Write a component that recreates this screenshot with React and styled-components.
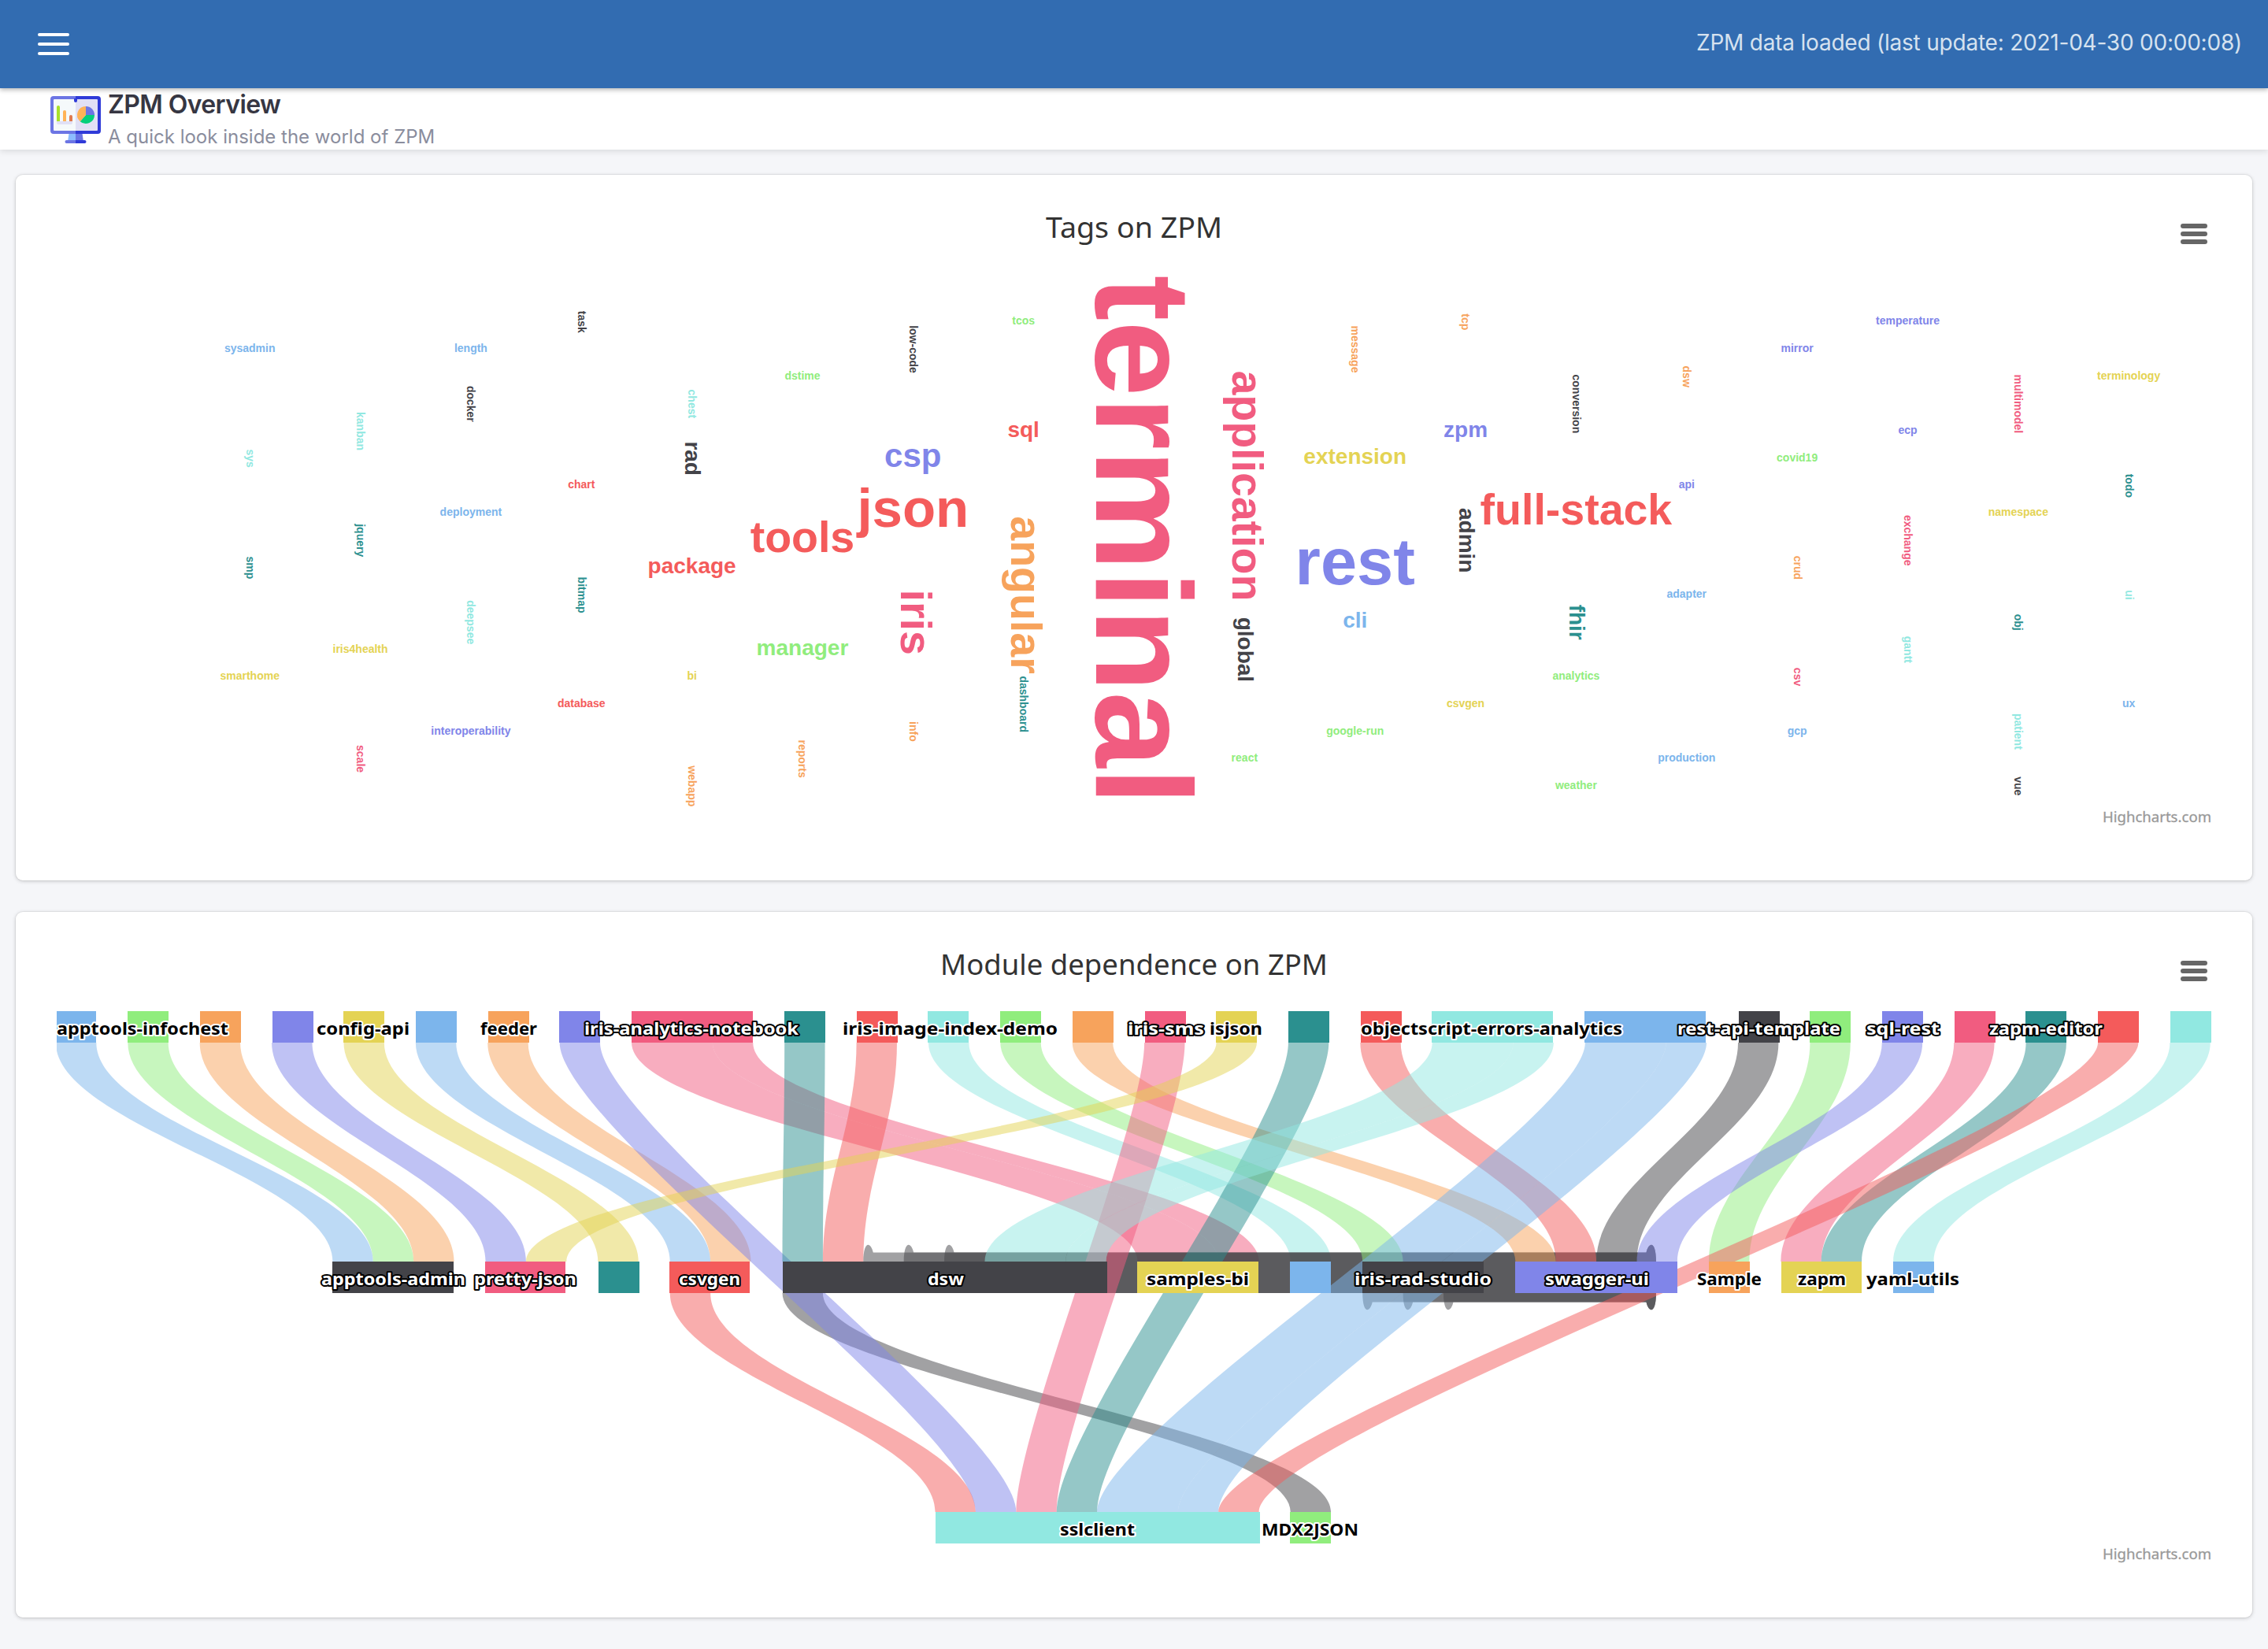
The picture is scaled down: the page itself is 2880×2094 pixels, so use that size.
import React from 'react';
import styled, { createGlobalStyle } from 'styled-components';

const GlobalStyle = createGlobalStyle`
  * { box-sizing: border-box; }
  body {
    margin: 0;
    background: #f5f6f9;
    font-family: Inter, Roboto, "Liberation Sans", sans-serif;
  }
`;

const palette = {
  blue: '#7cb5ec',
  dark: '#434348',
  green: '#90ed7d',
  orange: '#f7a35c',
  indigo: '#8085e9',
  pink: '#f15c80',
  yellow: '#e4d354',
  teal: '#2b908f',
  red: '#f45b5b',
  cyan: '#91e8e1',
};

/* ---------- shell ---------- */

const Page = styled.div`
  display: flex;
  flex-direction: column;
  min-height: 2094px;
`;

const TopBar = styled.header`
  display: flex;
  align-items: center;
  justify-content: space-between;
  height: 112px;
  padding: 0 33px 0 48px;
  background: #326cb1;
  box-shadow: 0 2px 6px rgba(0, 0, 0, 0.3);
  z-index: 2;
`;

const MenuButton = styled.button`
  display: flex;
  flex-direction: column;
  gap: 8px;
  padding: 0;
  border: 0;
  background: none;
`;

const MenuLine = styled.span`
  width: 40px;
  height: 4px;
  border-radius: 2px;
  background: #fff;
`;

const Status = styled.span`
  font-size: 28px;
  line-height: 34px;
  letter-spacing: ${(p) => p.$tracking};
  color: #d6e2ef;
  white-space: nowrap;
  padding-bottom: 4px;
`;

const PageHeading = styled.section`
  display: flex;
  align-items: flex-start;
  gap: 9px;
  height: 78px;
  padding: 0 64px;
  background: #fff;
  box-shadow: 0 2px 8px rgba(0, 0, 0, 0.12);
  z-index: 1;
`;

const HeadingIcon = styled.svg`
  display: block;
  width: 64px;
  height: 64px;
  margin-top: 8px;
`;

const HeadingText = styled.div`
  display: flex;
  flex-direction: column;
`;

const Title = styled.h1`
  margin: 1px 0 0;
  font-size: 32px;
  line-height: 40px;
  font-weight: 600;
  letter-spacing: ${(p) => p.$tracking};
  color: #363642;
`;

const Subtitle = styled.p`
  margin: 5px 0 0;
  font-size: 24px;
  line-height: 32px;
  letter-spacing: ${(p) => p.$tracking};
  color: #8a8d9d;
`;

const Content = styled.main`
  display: flex;
  flex-direction: column;
  gap: 40px;
  padding: 32px 20px 40px;
`;

const Card = styled.article`
  display: flex;
  height: 896px;
  border-radius: 9px;
  background: #fff;
  box-shadow: 0 0 0 1px rgba(0, 0, 0, 0.04), 0 1px 5px rgba(0, 0, 0, 0.2);
`;

const Chart = styled.svg`
  display: block;
  width: 100%;
  height: 100%;
`;

const ChartTitle = styled.text`
  font-family: "Noto Sans", "Open Sans", sans-serif;
  font-size: 36px;
  fill: #333;
`;

const Credits = styled.text`
  font-family: "Noto Sans", "Open Sans", sans-serif;
  font-size: 18px;
  fill: #999;
  stroke: #999;
  stroke-width: 0.3px;
`;

const TagText = styled.text`
  font-family: "Liberation Sans", Arial, sans-serif;
  font-weight: 700;
  font-size: ${(p) => p.$size}px;
  fill: ${(p) => p.$color};
  text-anchor: middle;
`;

const NodeLabel = styled.text`
  font-family: "Noto Sans", "Open Sans", sans-serif;
  font-weight: 700;
  font-size: 22px;
  fill: ${(p) => (p.$light ? '#fff' : '#000')};
  stroke: ${(p) => (p.$light ? '#000' : '#fff')};
  stroke-width: 4px;
  stroke-linejoin: round;
  paint-order: stroke;
`;

function ContextMenu() {
  return (
    <g stroke="#666" strokeWidth="6" strokeLinecap="round">
      <path d="M2752 65H2780M2752 75H2780M2752 85H2780" />
    </g>
  );
}

function ChartFrame({ title, titleX, titleWidth, children }) {
  return (
    <Card>
      <Chart viewBox="0 0 2840 896">
        <ChartTitle x={titleX} y="80" textLength={titleWidth} lengthAdjust="spacingAndGlyphs">
          {title}
        </ChartTitle>
        {children}
        <ContextMenu />
        <Credits x="2650" y="822" textLength="138" lengthAdjust="spacingAndGlyphs">
          Highcharts.com
        </Credits>
      </Chart>
    </Card>
  );
}

/* ---------- word cloud ---------- */

// [text, column, row, colour, rotated, size]
const tags = [
  ['sysadmin', -8, 0, 'blue'], ['sys', -8, 4, 'cyan', 1], ['smp', -8, 8, 'teal', 1], ['smarthome', -8, 12, 'yellow'],
  ['kanban', -7, 3, 'cyan', 1], ['jquery', -7, 7, 'teal', 1], ['iris4health', -7, 11, 'yellow'], ['scale', -7, 15, 'pink', 1],
  ['length', -6, 0, 'blue'], ['docker', -6, 2, 'dark', 1], ['deployment', -6, 6, 'blue'], ['deepsee', -6, 10, 'cyan', 1],
  ['interoperability', -6, 14, 'indigo'],
  ['task', -5, -1, 'dark', 1], ['chart', -5, 5, 'red'], ['bitmap', -5, 9, 'teal', 1], ['database', -5, 13, 'red'],
  ['chest', -4, 2, 'cyan', 1], ['rad', -4, 4, 'dark', 1, 28], ['package', -4, 8, 'red', 0, 28], ['bi', -4, 12, 'yellow'],
  ['webapp', -4, 16, 'orange', 1],
  ['dstime', -3, 1, 'green'], ['tools', -3, 7, 'red', 0, 55.5], ['manager', -3, 11, 'green', 0, 28], ['reports', -3, 15, 'orange', 1],
  ['low-code', -2, 0, 'dark', 1], ['csp', -2, 4, 'indigo', 0, 42], ['json', -2, 6, 'red', 0, 69], ['iris', -2, 10, 'pink', 1, 55.5],
  ['info', -2, 14, 'orange', 1],
  ['tcos', -1, -1, 'green'], ['sql', -1, 3, 'red', 0, 28], ['angular', -1, 9, 'orange', 1, 55.5], ['dashboard', -1, 13, 'teal', 1],
  ['terminal', 0, 7, 'pink', 1, 173],
  ['application', 1, 5, 'pink', 1, 55.5], ['global', 1, 11, 'dark', 1, 28], ['react', 1, 15, 'green'],
  ['message', 2, 0, 'orange', 1], ['extension', 2, 4, 'yellow', 0, 28], ['rest', 2, 8, 'indigo', 0, 83], ['cli', 2, 10, 'blue', 0, 28],
  ['google-run', 2, 14, 'green'],
  ['tcp', 3, -1, 'orange', 1], ['zpm', 3, 3, 'indigo', 0, 28], ['admin', 3, 7, 'dark', 1, 28], ['csvgen', 3, 13, 'yellow'],
  ['conversion', 4, 2, 'dark', 1], ['full-stack', 4, 6, 'red', 0, 55.5], ['fhir', 4, 10, 'teal', 1, 28], ['analytics', 4, 12, 'green'],
  ['weather', 4, 16, 'green'],
  ['dsw', 5, 1, 'orange', 1], ['api', 5, 5, 'indigo'], ['adapter', 5, 9, 'blue'], ['production', 5, 15, 'blue'],
  ['mirror', 6, 0, 'indigo'], ['covid19', 6, 4, 'green'], ['crud', 6, 8, 'orange', 1], ['csv', 6, 12, 'pink', 1], ['gcp', 6, 14, 'blue'],
  ['temperature', 7, -1, 'indigo'], ['ecp', 7, 3, 'indigo'], ['exchange', 7, 7, 'pink', 1], ['gantt', 7, 11, 'cyan', 1],
  ['multimodel', 8, 2, 'pink', 1], ['namespace', 8, 6, 'yellow'], ['obj', 8, 10, 'teal', 1], ['patient', 8, 14, 'cyan', 1],
  ['vue', 8, 16, 'dark', 1],
  ['terminology', 9, 1, 'yellow'], ['todo', 9, 5, 'teal', 1], ['ui', 9, 9, 'cyan', 1], ['ux', 9, 13, 'blue'],
];

function Tag({ tag }) {
  const [text, column, row, color, rotated, size = 14] = tag;
  const x = 1420 + column * 140.35;
  const y = 221.5 + row * 34.67;
  const baseline = rotated ? size * 0.27 + 0.8 : size * 0.26;
  return (
    <TagText
      $size={size}
      $color={palette[color]}
      y={baseline}
      transform={`translate(${x} ${y})${rotated ? ' rotate(90)' : ''}`}
    >
      {text}
    </TagText>
  );
}

/* ---------- dependency sankey ---------- */

const UNIT = 51.39;
const GAP = 40;
const NODE_HEIGHT = 40;
const ROW_DISTANCE = 318;
const CURVE_FACTOR = 0.33;
const rowY = [126, 444, 762];

// Each row: left edge and its nodes as [id, weight, colour]
const rows = [
  {
    left: 50.9,
    nodes: [
      ['t1', 1, 'blue'], ['t2', 1, 'green'], ['t3', 1, 'orange'], ['t4', 1, 'indigo'], ['t5', 1, 'yellow'],
      ['t6', 1, 'blue'], ['t7', 1, 'orange'], ['t8', 1, 'indigo'], ['t9', 3, 'pink'], ['t10', 1, 'teal'],
      ['t11', 1, 'red'], ['t12', 1, 'cyan'], ['t13', 1, 'green'], ['t14', 1, 'orange'], ['t15', 1, 'pink'],
      ['t16', 1, 'yellow'], ['t17', 1, 'teal'], ['t18', 1, 'red'], ['t19', 3, 'cyan'], ['t20', 3, 'blue'],
      ['t21', 1, 'dark'], ['t22', 1, 'green'], ['t23', 1, 'indigo'], ['t24', 1, 'pink'], ['t25', 1, 'teal'],
      ['t26', 1, 'red'], ['t27', 1, 'cyan'],
    ],
  },
  {
    left: 402.4,
    nodes: [
      ['admin', 3, 'dark'], ['pretty', 2, 'pink'], ['m3', 1, 'teal'], ['csvgen', 2, 'red'], ['dsw', 8, 'dark'],
      ['samples', 3, 'yellow'], ['m7', 1, 'blue'], ['studio', 3, 'dark'], ['swagger', 4, 'indigo'],
      ['sample', 1, 'orange'], ['zapm', 2, 'yellow'], ['yaml', 1, 'blue'],
    ],
  },
  { left: 1167.6, nodes: [['ssl', 8, 'cyan'], ['mdx', 1, 'green']] },
];

// [from, to, weight]; the entry "loop" is the iris-rad-studio to dsw back link
const links = [
  ['t1', 'admin', 1], ['t2', 'admin', 1], ['t3', 'admin', 1], ['t4', 'pretty', 1], ['t5', 'm3', 1],
  ['csvgen', 'ssl', 1], ['t6', 'csvgen', 1], ['dsw', 'mdx', 1], ['t7', 'csvgen', 1], ['t8', 'ssl', 1],
  ['t9', 'samples', 2], ['t9', 'samples', 1], ['t10', 'dsw', 1], ['t11', 'dsw', 1], ['t12', 'm7', 1],
  ['loop', 'dsw', 3],
  ['t13', 'studio', 1], ['t14', 'swagger', 1], ['t15', 'ssl', 1], ['t16', 'pretty', 1], ['t17', 'ssl', 1],
  ['t18', 'swagger', 1], ['t19', 'dsw', 2], ['t19', 'dsw', 1], ['t20', 'ssl', 2], ['t20', 'ssl', 1],
  ['t21', 'swagger', 1], ['t22', 'sample', 1], ['t23', 'swagger', 1], ['t24', 'zapm', 1], ['t25', 'zapm', 1],
  ['t26', 'ssl', 1], ['t27', 'yaml', 1],
];

// [text, row, left, width, light]
const labels = [
  ['apptools-infochest', 0, 52, 218], ['config-api', 0, 382, 118], ['feeder', 0, 590, 72],
  ['iris-analytics-notebook', 0, 722, 272, true], ['iris-image-index-demo', 0, 1050, 273],
  ['iris-sms', 0, 1412, 97, true], ['isjson', 0, 1516, 67], ['objectscript-errors-analytics', 0, 1708, 332],
  ['rest-api-template', 0, 2110, 207, true], ['sql-rest', 0, 2350, 93, true], ['zapm-editor', 0, 2506, 144, true],
  ['apptools-admin', 1, 388, 183, true], ['pretty-json', 1, 582, 130, true], ['csvgen', 1, 842, 78, true],
  ['dsw', 1, 1158, 46, true], ['samples-bi', 1, 1436, 130], ['iris-rad-studio', 1, 1700, 174, true],
  ['swagger-ui', 1, 1942, 132, true], ['Sample', 1, 2135, 82], ['zapm', 1, 2263, 61], ['yaml-utils', 1, 2350, 118],
  ['sslclient', 2, 1326, 95], ['MDX2JSON', 2, 1582, 123],
];

const even = (v) => Math.round(v / 2) * 2;

function layoutNodes() {
  const nodes = {};
  rows.forEach((row, level) => {
    let x = row.left;
    row.nodes.forEach(([id, weight, color]) => {
      nodes[id] = { id, x, level, color, width: weight * UNIT, usedIn: 0, usedOut: 0 };
      x += weight * UNIT + GAP;
    });
  });
  return nodes;
}

function ribbonPath(x0, y0, x1, y1, w) {
  const c = ROW_DISTANCE * CURVE_FACTOR;
  return `M${x0} ${y0}C${x0} ${y0 + c} ${x1} ${y1 - c} ${x1} ${y1}H${x1 + w}C${x1 + w} ${y1 - c} ${x0 + w} ${y0 + c} ${x0 + w} ${y0}Z`;
}

function loopPath(top, bottom) {
  const r = 2083;
  return [
    `M${top} 484V444C${top} 418 ${top + 9} 418 ${top + 12.5} 432.5`,
    `H${r - 12.5}C${r - 9} 418 ${r} 418 ${r} 444V484`,
    `C${r} 510 ${r - 9} 510 ${r - 12.5} 495.5H${bottom + 12.5}`,
    `C${bottom + 9} 510 ${bottom} 510 ${bottom} 484Z`,
  ].join('');
}

function buildSankey() {
  const nodes = layoutNodes();
  const ribbons = [];
  links.forEach(([from, to, weight]) => {
    const target = nodes[to];
    const x1 = target.x + target.usedIn * UNIT;
    target.usedIn += weight;
    if (from === 'loop') {
      for (let i = 0; i < weight; i += 1) {
        ribbons.push({ color: 'dark', d: loopPath(x1 + i * UNIT, nodes.studio.x + i * UNIT) });
      }
      return;
    }
    const source = nodes[from];
    const x0 = source.x + source.usedOut * UNIT;
    source.usedOut += weight;
    ribbons.push({
      color: source.color,
      d: ribbonPath(x0, rowY[source.level] + NODE_HEIGHT, x1, rowY[target.level], weight * UNIT),
    });
  });
  return { nodes: Object.values(nodes), ribbons };
}

const sankey = buildSankey();

function Sankey() {
  return (
    <>
      <clipPath id="plot">
        <rect x="52" y="100" width="2736" height="740" />
      </clipPath>
      <g clipPath="url(#plot)">
        {sankey.ribbons.map((r, i) => (
          <path key={i} d={r.d} fill={palette[r.color]} fillOpacity="0.5" />
        ))}
        {sankey.nodes.map((n) => (
          <rect key={n.id} x={even(n.x)} y={rowY[n.level]} width={even(n.width)} height={NODE_HEIGHT} fill={palette[n.color]} />
        ))}
      </g>
      {labels.map(([text, level, x, width, light]) => (
        <NodeLabel key={text} $light={light} x={x} y={rowY[level] + 30} textLength={width} lengthAdjust="spacingAndGlyphs">
          {text}
        </NodeLabel>
      ))}
    </>
  );
}

/* ---------- heading icon ---------- */

function MonitorIcon() {
  return (
    <HeadingIcon viewBox="0 0 64 64">
      <path d="M24 46h8v14h-10z" fill="#8cbcff" />
      <path d="M32 46h8l2 14H32z" fill="#6c75e4" />
      <path d="M32 58v4H20.500a2 2 0 0 1 0-4z" fill="#6c75e4" />
      <path d="M32 58v4h11.500a2 2 0 0 0 0-4z" fill="#2f3ad8" />
      <path d="M32 2H4a4 4 0 0 0-4 4v40a4 4 0 0 0 4 4h28z" fill="#6c75e4" />
      <path d="M32 2h28a4 4 0 0 1 4 4v40a4 4 0 0 1-4 4H32z" fill="#2f3ad8" />
      <path d="M32 6H5a1 1 0 0 0-1 1v38a1 1 0 0 0 1 1h27z" fill="#f5f9fb" />
      <path d="M32 6h27a1 1 0 0 1 1 1v38a1 1 0 0 1-1 1H32z" fill="#e1e0f5" />
      <path d="M30 5h4v3a2 2 0 0 1-4 0z" fill="#2f3ad8" />
      <path d="M8 34h20v2a2 2 0 0 1-2 2H10a2 2 0 0 1-2-2z" fill="#e1e0f5" />
      <path d="M8 34V16a2 2 0 0 1 4 0v18z" fill="#a9e02a" />
      <path d="M16 34V22a2 2 0 0 1 4 0v12z" fill="#ffb357" />
      <path d="M24 34v-6a2 2 0 0 1 4 0v6z" fill="#e07a50" />
      <path d="M45 26V15a11 11 0 0 1 11 11z" fill="#6c75e4" />
      <path d="M45 26h11a11 11 0 0 1-18.300 8.200z" fill="#05cf7b" />
      <path d="M45 26l-7.300 8.200A11 11 0 0 1 45 15z" fill="#ffb357" />
    </HeadingIcon>
  );
}

export default function App() {
  return (
    <Page>
      <GlobalStyle />
      <TopBar>
        <MenuButton aria-label="Menu">
          <MenuLine />
          <MenuLine />
          <MenuLine />
        </MenuButton>
        <Status $tracking="-0.22px">ZPM data loaded (last update: 2021-04-30 00:00:08)</Status>
      </TopBar>
      <PageHeading>
        <MonitorIcon />
        <HeadingText>
          <Title $tracking="-0.6px">ZPM Overview</Title>
          <Subtitle $tracking="0px">A quick look inside the world of ZPM</Subtitle>
        </HeadingText>
      </PageHeading>
      <Content>
        <ChartFrame title="Tags on ZPM" titleX="1308" titleWidth="224">
          {tags.map((tag) => (
            <Tag key={tag[0]} tag={tag} />
          ))}
        </ChartFrame>
        <ChartFrame title="Module dependence on ZPM" titleX="1174" titleWidth="492">
          <Sankey />
        </ChartFrame>
      </Content>
    </Page>
  );
}
